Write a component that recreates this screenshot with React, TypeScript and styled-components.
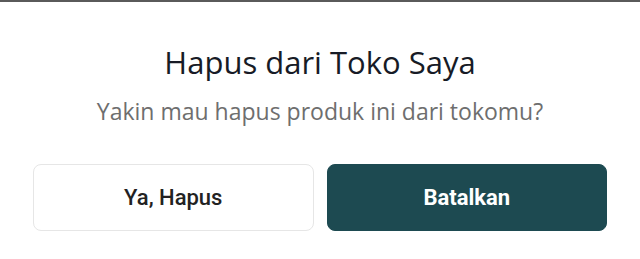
import styled, { createGlobalStyle } from "styled-components";

const GlobalStyle = createGlobalStyle`
    html, body {
        margin: 0;
        padding: 0;
        background: #ffffff;
    }
`;

const Sheet = styled.div`
    width: 640px;
    height: 259px;
    box-sizing: border-box;
    border-top: 2px solid #5a5a5a;
    background: #ffffff;
    display: flex;
    flex-direction: column;
    align-items: center;
    padding: 0 33px;
`;

const Title = styled.h2`
    margin: 40px 0 0;
    font-family: "Open Sans", "Noto Sans", sans-serif;
    font-weight: 400;
    font-size: 31px;
    line-height: 40px;
    color: #171b26;
`;

const Subtitle = styled.p`
    margin: 14px 0 0;
    font-family: "Open Sans", "Noto Sans", sans-serif;
    font-size: 23px;
    line-height: 30px;
    color: #6e6e6e;
`;

const Actions = styled.div`
    margin-top: 38px;
    width: 100%;
    display: grid;
    grid-template-columns: 1fr 1fr;
    gap: 13px;
`;

const Button = styled.button<{ $primary?: boolean }>`
    height: 67px;
    border-radius: 8px;
    font-family: Roboto, "Liberation Sans", sans-serif;
    font-size: 22px;
    font-weight: ${(p) => (p.$primary ? 700 : 500)};
    color: ${(p) => (p.$primary ? "#ffffff" : "#222222")};
    background: ${(p) => (p.$primary ? "#1d4a51" : "#ffffff")};
    border: 1px solid ${(p) => (p.$primary ? "#1d4a51" : "#e6e6e6")};
    cursor: pointer;
`;

const App = () => {
    return (
        <>
            <GlobalStyle />
            <Sheet>
                <Title>Hapus dari Toko Saya</Title>
                <Subtitle>Yakin mau hapus produk ini dari tokomu?</Subtitle>
                <Actions>
                    <Button>Ya, Hapus</Button>
                    <Button $primary>Batalkan</Button>
                </Actions>
            </Sheet>
        </>
    );
};

export default App;
